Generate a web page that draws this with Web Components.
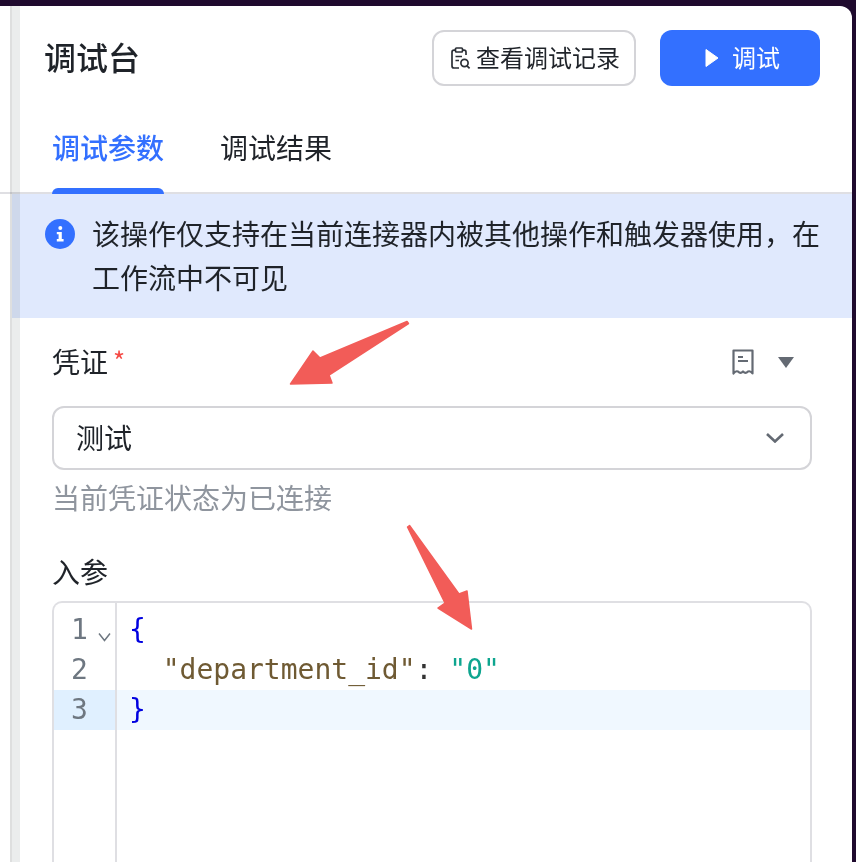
<!DOCTYPE html>
<html lang="zh">
<head>
<meta charset="utf-8">
<title>调试台</title>
<style>
  html, body { margin: 0; height: 100%; overflow: hidden; background: #1f0a2e; }
  body { font-family: "Noto Sans CJK SC", "Liberation Sans", sans-serif; color: #1f2329; }
</style>
</head>
<body>
<app-shell>
  <debug-header title-text="调试台"></debug-header>
  <debug-tabs></debug-tabs>
  <info-banner>该操作仅支持在当前连接器内被其他操作和触发器使用，在工作流中不可见</info-banner>
  <credential-field></credential-field>
  <code-editor></code-editor>
</app-shell>

<script>
// small helper so each class only has to give its html
function mount(el, html) {
  el.attachShadow({ mode: 'open' });
  const template = document.createElement('template');
  template.innerHTML = html;
  el.shadowRoot.appendChild(template.content.cloneNode(true));
}

class AppShell extends HTMLElement {
  connectedCallback() {
    mount(this, `
      <style>
        :host { display: block; height: 862px; box-sizing: border-box; padding: 6px 4px 0 0; }
        .window {
          position: relative; height: 100%; background: #fff; overflow: hidden;
          border-top-right-radius: 12px;
        }
        /* resize strip lies over the banner, which shows through it */
        .strip {
          position: absolute; left: 10px; top: 0; bottom: 0; width: 8px;
          background: #ebeded; border-left: 2px solid #dedfdf;
          mix-blend-mode: multiply;
        }
        /* arrows were drawn on top of the screenshot */
        svg { position: absolute; left: 0; top: -6px; pointer-events: none; }
      </style>
      <div class="window">
        <slot></slot>
        <div class="strip"></div>
        <svg width="852" height="862" viewBox="0 0 852 862" fill="#f25c58" stroke="#f25c58" stroke-width="1.5" stroke-linejoin="round">
          <path d="M407 321.5 L408.5 323.5 L329 375 L332 383 L290.5 384 L313 351 L320 358 Z"/>
          <path d="M407.5 527 L409.5 525.5 L459 594 L467 591 L471.5 629 L438 608 L445 603 Z"/>
        </svg>
      </div>
    `);
  }
}

class DebugHeader extends HTMLElement {
  connectedCallback() {
    mount(this, `
      <style>
        :host { display: flex; align-items: center; height: 56px; padding: 24px 32px 0 45px; }
        h2 { flex: 1; margin: 0; padding-bottom: 3px; margin-left: -1px; font-size: 32px; font-weight: 500; line-height: 53px; color: #1f2329; }
        button {
          display: flex; align-items: center; justify-content: center; box-sizing: border-box;
          height: 56px; border-radius: 12px; font: inherit; font-size: 24px; cursor: pointer;
        }
        button span { padding-bottom: 3px; }
        .history { width: 204px; background: #fff; border: 2px solid #d4d4d8; color: #1f2329; gap: 5px; padding: 0 0 0 2px; }
        .history svg { margin: 1px 0 0 1px; }
        .run { width: 160px; margin-left: 24px; background: #3370ff; border: 0; color: #fff; gap: 13px; padding: 0 0 0 5px; }
      </style>
      <h2>${this.getAttribute('title-text')}</h2>
      <button class="history">
        <svg width="20" height="24" viewBox="0 0 20 24" fill="none" stroke="#2b2f36" stroke-width="1.7">
          <path d="M15 8 V5.2 Q15 3.2 13 3.2 H11.5 M4.5 3.2 H3 Q1 3.2 1 5.2 V19 Q1 21 3 21 H8"/>
          <rect x="4.5" y="1" width="7" height="4" rx="1"/>
          <path d="M4.5 9.5 H11 M4.5 13.5 H8"/>
          <circle cx="13.5" cy="16" r="3.6"/>
          <path d="M16 18.8 L18.6 21.4"/>
        </svg>
        <span>查看调试记录</span>
      </button>
      <button class="run">
        <svg width="14" height="20" viewBox="0 0 14 20"><path d="M1 1.5 L13 10 L1 18.5 Z" fill="#fff" stroke="#fff" stroke-linejoin="round"/></svg>
        <span>调试</span>
      </button>
    `);
  }
}

class DebugTabs extends HTMLElement {
  connectedCallback() {
    mount(this, `
      <style>
        :host {
          display: flex; gap: 56px; height: 106px; padding-left: 52px;
          border-bottom: 2px solid #dfdfe3; font-size: 28px;
        }
        div { position: relative; line-height: 40px; padding-top: 41px; color: #1f2329; }
        .on { color: #3370ff; font-weight: 500; }
        .on::after {
          content: ""; position: absolute; left: 0; right: 0; bottom: -2px; height: 6px;
          background: #3370ff; border-radius: 6px 6px 0 0;
        }
      </style>
      <div class="on">调试参数</div>
      <div>调试结果</div>
    `);
  }
}

class InfoBanner extends HTMLElement {
  connectedCallback() {
    mount(this, `
      <style>
        :host {
          display: flex; gap: 17px; height: 124px; box-sizing: border-box;
          padding: 17px 20px 0 33px; background: #e0e9fd; margin-left: 12px;
          font-size: 28px; line-height: 44px; color: #1f2329;
        }
        svg { flex: none; margin-top: 8px; }
        p { margin: 0; width: 745px; }
      </style>
      <svg width="30" height="30" viewBox="0 0 30 30">
        <circle cx="15" cy="15" r="15" fill="#3370ff"/>
        <circle cx="15.3" cy="9" r="2" fill="#fff"/>
        <path d="M11.8 13 H16.8 V20 H18.6 V22.4 H11.8 V20 H13.6 V15.3 H11.8 Z" fill="#fff"/>
      </svg>
      <p><slot></slot></p>
    `);
  }
}

class CredentialField extends HTMLElement {
  connectedCallback() {
    mount(this, `
      <style>
        :host { display: block; padding: 20px 40px 0 52px; font-size: 28px; }
        .head { display: flex; align-items: center; height: 48px; }
        label { flex: 1; line-height: 44px; padding-bottom: 4px; }
        label i { font-style: normal; color: #f54a45; font-size: 26px; margin-left: 5px; vertical-align: 2px; }
        .tools { display: flex; align-items: center; gap: 24px; padding-right: 18px; }
        .select {
          display: flex; align-items: center; justify-content: space-between; box-sizing: border-box;
          height: 64px; margin-top: 20px; padding: 0 26px 0 22px;
          border: 2px solid #d4d4d8; border-radius: 12px;
        }
        .select span { padding-bottom: 2px; }
        .hint { margin-top: 6px; line-height: 42px; color: #8f959e; }
        .params { margin-top: 32px; line-height: 42px; }
      </style>
      <div class="head">
        <label>凭证<i>*</i></label>
        <div class="tools">
          <svg width="22" height="26" viewBox="0 0 22 26" fill="none" stroke="#646a73" stroke-width="2.2">
            <path d="M1.5 24.5 V1.5 H20.5 V24.5 Q18.5 21.5 16 22.5 Q13.5 25 11 22.5 Q8.5 25 6 22.5 Q3.5 21.5 1.5 24.5 Z" stroke-linejoin="round"/>
            <path d="M6 8 H11 M6 12 H16" stroke-width="2"/>
          </svg>
          <svg width="16" height="11" viewBox="0 0 16 11"><path d="M0 0 H16 L8 11 Z" fill="#646a73"/></svg>
        </div>
      </div>
      <div class="select">
        <span>测试</span>
        <svg width="18" height="10" viewBox="0 0 18 10" fill="none" stroke="#646a73" stroke-width="2.6"><path d="M1 1 L9 8.5 L17 1"/></svg>
      </div>
      <div class="hint">当前凭证状态为已连接</div>
      <div class="params">入参</div>
    `);
  }
}

class CodeEditor extends HTMLElement {
  connectedCallback() {
    mount(this, `
      <style>
        :host {
          display: grid; grid-template-columns: 63px 1fr; height: 300px; box-sizing: border-box;
          margin: 9px 40px 0 52px; padding-top: 7px;
          border: 2px solid #dfdfe3; border-bottom: 0; border-radius: 10px 10px 0 0;
          font: 28px/40px "DejaVu Sans Mono", monospace;
        }
        .gutter { border-right: 2px solid #dfdfe3; margin-top: -7px; padding-top: 7px; color: #6e7781; }
        .gutter div { position: relative; padding-left: 17px; height: 40px; }
        .gutter svg { position: absolute; left: 44px; top: 22px; }
        .gutter .active { background: #e0f0ff; }
        .lines div { height: 40px; padding-left: 12px; white-space: pre; color: #333; }
        .lines .active { background: #f0f8ff; }
        .brace { color: #0000e0; }
        .key { color: #6f5a33; }
        .str { color: #0ea58f; }
      </style>
      <div class="gutter">
        <div>1<svg width="13" height="10" viewBox="0 0 13 10" fill="none" stroke="#6e7781" stroke-width="1.5"><path d="M1 1.5 L6.5 8.5 L12 1.5"/></svg></div>
        <div>2</div>
        <div class="active">3</div>
      </div>
      <div class="lines">
        <div><span class="brace">{</span></div>
        <div>  <span class="key">"department_id"</span>: <span class="str">"0"</span></div>
        <div class="active"><span class="brace">}</span></div>
      </div>
    `);
  }
}

customElements.define('app-shell', AppShell);
customElements.define('debug-header', DebugHeader);
customElements.define('debug-tabs', DebugTabs);
customElements.define('info-banner', InfoBanner);
customElements.define('credential-field', CredentialField);
customElements.define('code-editor', CodeEditor);
</script>
</body>
</html>
